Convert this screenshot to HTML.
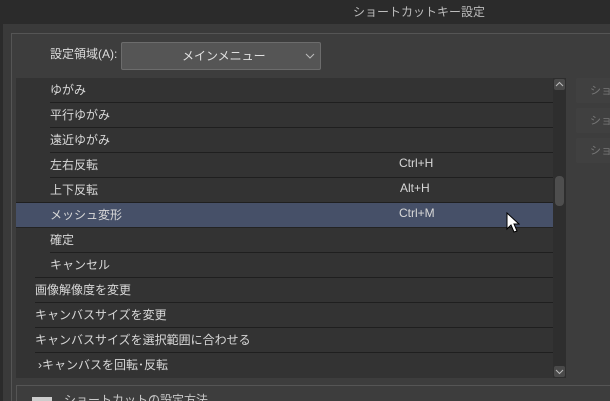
<!DOCTYPE html>
<html><head><meta charset="utf-8"><style>
*{margin:0;padding:0;box-sizing:border-box}
html,body{width:610px;height:401px;overflow:hidden}
body{background:#2b2b2b;font-family:"Liberation Sans","Noto Sans CJK JP",sans-serif;font-size:12px;color:#d8d8d8;position:relative}
.abs{position:absolute}
.row{position:absolute;left:16px;width:537px;height:25px;background:#333}
.row span{position:absolute;top:3px;font-size:12px}
.sep{position:absolute;height:1px;background:#1f1f1f;right:0;bottom:0}
.btn{position:absolute;left:576px;width:40px;height:25px;background:#404040;border-radius:2px;color:#777;padding:4px 0 0 14px;font-size:11px}
</style></head><body>
<div class="abs" style="left:0;top:0;width:610px;height:24px;background:#2b2b2b"></div>
<div class="abs" style="left:353px;top:3px;color:#bdbdbd;font-size:12px">ショートカットキー設定</div>
<div class="abs" style="left:3px;top:24px;width:607px;height:377px;background:#3a3a3a"></div>
<div class="abs" style="left:11px;top:33px;width:600px;height:368px;border:1px solid #555;border-right:none;border-bottom:none;background:#3d3d3d"></div>
<div class="abs" style="left:50px;top:45px;color:#ddd">設定領域(A):</div>
<div class="abs" style="left:121px;top:42px;width:200px;height:28px;background:#555;border:1px solid #6c6c6c;border-radius:2px"></div>
<div class="abs" style="left:182px;top:47px;color:#e0e0e0">メインメニュー</div>
<svg class="abs" style="left:305px;top:52px" width="10" height="8"><path d="M1 2 L5 6 L9 2" stroke="#bbb" fill="none" stroke-width="1"/></svg>
<div class="abs" style="left:16px;top:78px;width:550px;height:300px;background:#333"></div>

<div class="row" style="top:78px"><span style="left:34px">ゆがみ</span><div class="sep" style="left:34px"></div></div>
<div class="row" style="top:103px"><span style="left:34px">平行ゆがみ</span><div class="sep" style="left:34px"></div></div>
<div class="row" style="top:128px"><span style="left:34px">遠近ゆがみ</span><div class="sep" style="left:34px"></div></div>
<div class="row" style="top:153px"><span style="left:34px">左右反転</span><span style="left:383px">Ctrl+H</span><div class="sep" style="left:34px"></div></div>
<div class="row" style="top:178px"><span style="left:34px">上下反転</span><span style="left:384px">Alt+H</span><div class="sep" style="left:0"></div></div>
<div class="row" style="top:203px;background:#465068"><span style="left:34px">メッシュ変形</span><span style="left:383px">Ctrl+M</span><div class="sep" style="left:0;background:#232323"></div></div>
<div class="row" style="top:228px"><span style="left:34px">確定</span><div class="sep" style="left:34px"></div></div>
<div class="row" style="top:253px"><span style="left:34px">キャンセル</span><div class="sep" style="left:19px"></div></div>
<div class="row" style="top:278px"><span style="left:19px">画像解像度を変更</span><div class="sep" style="left:19px"></div></div>
<div class="row" style="top:303px"><span style="left:19px">キャンバスサイズを変更</span><div class="sep" style="left:19px"></div></div>
<div class="row" style="top:328px"><span style="left:19px">キャンバスサイズを選択範囲に合わせる</span><div class="sep" style="left:19px"></div></div>
<div class="row" style="top:353px"><span style="left:22px">›キャンバスを回転･反転</span></div>

<div class="abs" style="left:553px;top:78px;width:13px;height:300px;background:#2e2e2e"></div>
<div class="abs" style="left:554px;top:79px;width:11px;height:11px;background:#4a4a4a;border-radius:2px"></div>
<svg class="abs" style="left:555px;top:81px" width="9" height="6"><path d="M1 5 L4.5 1.5 L8 5" stroke="#bbb" fill="none"/></svg>
<div class="abs" style="left:555px;top:176px;width:9px;height:30px;background:#4e4e4e;border-radius:4px"></div>
<div class="abs" style="left:554px;top:366px;width:11px;height:11px;background:#4a4a4a;border-radius:2px"></div>
<svg class="abs" style="left:555px;top:369px" width="9" height="6"><path d="M1 1 L4.5 4.5 L8 1" stroke="#bbb" fill="none"/></svg>

<div class="btn" style="top:78px">ショ</div>
<div class="btn" style="top:108px">ショ</div>
<div class="btn" style="top:138px">ショ</div>

<div class="abs" style="left:16px;top:385px;width:600px;height:20px;border:1px solid #555;border-right:none;background:#3d3d3d"></div>
<div class="abs" style="left:32px;top:397px;width:20px;height:4px;background:#ccc"></div>
<div class="abs" style="left:64px;top:391px;color:#ccc">ショートカットの設定方法</div>
<svg class="abs" style="left:506px;top:212px" width="14" height="22"><path d="M1 1 L1 17 L5 13 L8 20 L11 19 L8 12 L13 12 Z" fill="#fff" stroke="#000" stroke-width="1"/></svg>
</body></html>
